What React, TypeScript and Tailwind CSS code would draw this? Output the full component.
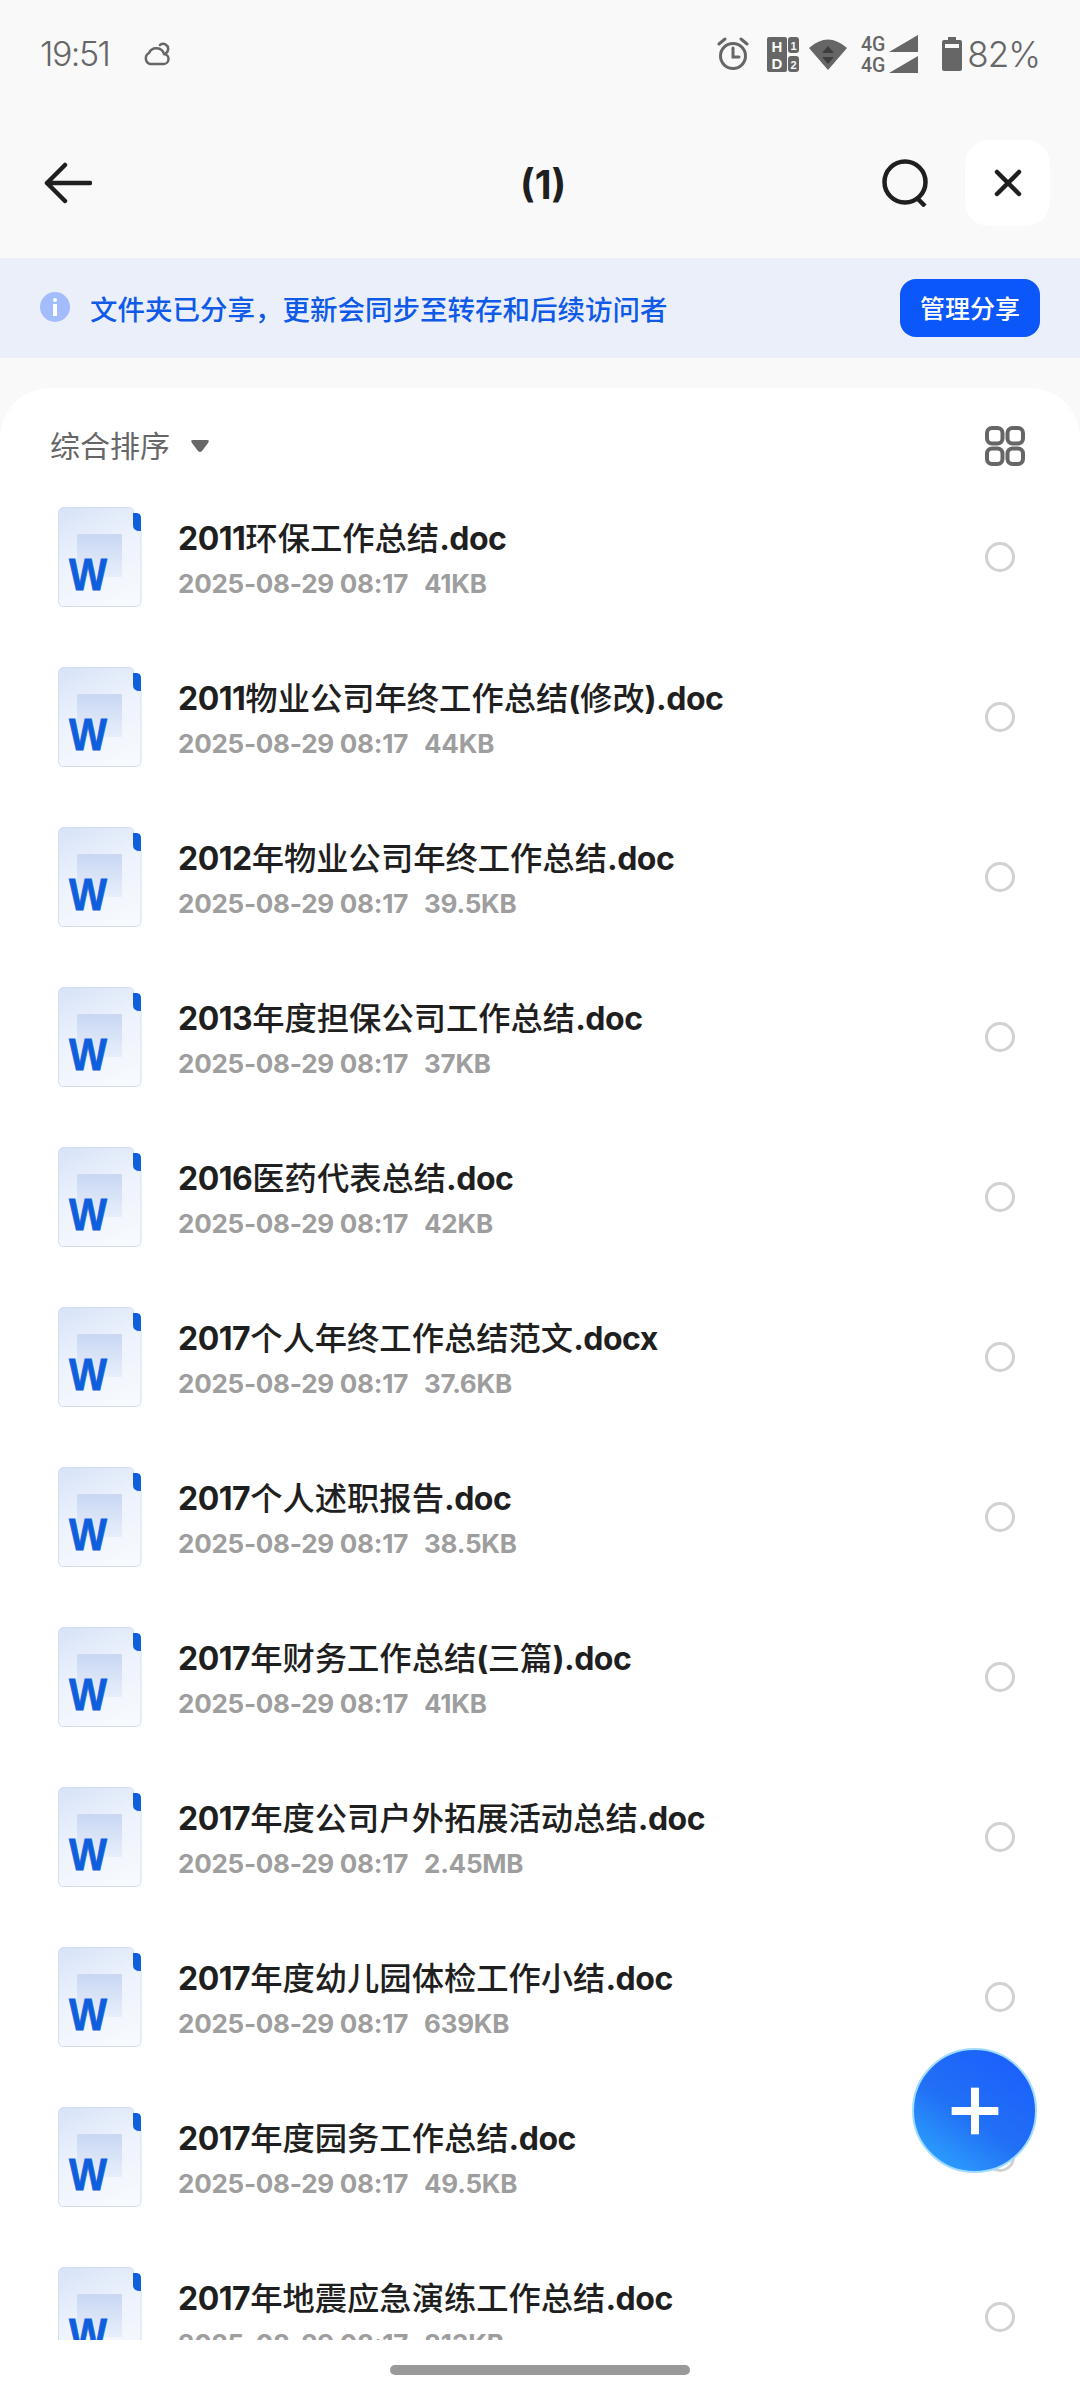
import { Plus } from 'lucide-react';

const files = [
  { name: '2011环保工作总结.doc', size: '41KB' },
  { name: '2011物业公司年终工作总结(修改).doc', size: '44KB' },
  { name: '2012年物业公司年终工作总结.doc', size: '39.5KB' },
  { name: '2013年度担保公司工作总结.doc', size: '37KB' },
  { name: '2016医药代表总结.doc', size: '42KB' },
  { name: '2017个人年终工作总结范文.docx', size: '37.6KB' },
  { name: '2017个人述职报告.doc', size: '38.5KB' },
  { name: '2017年财务工作总结(三篇).doc', size: '41KB' },
  { name: '2017年度公司户外拓展活动总结.doc', size: '2.45MB' },
  { name: '2017年度幼儿园体检工作小结.doc', size: '639KB' },
  { name: '2017年度园务工作总结.doc', size: '49.5KB' },
  { name: '2017年地震应急演练工作总结.doc', size: '813KB' },
];

function WordIcon() {
  return (
    <svg width="84" height="100" viewBox="0 0 84 100" className="shrink-0">
      <defs>
        <linearGradient id="wordBody" x1="0.2" y1="0" x2="0.6" y2="1">
          <stop offset="0" stopColor="#d9e4f8" />
          <stop offset="0.45" stopColor="#ecf2fc" />
          <stop offset="1" stopColor="#f6f9fe" />
        </linearGradient>
        <linearGradient id="wordSquare" x1="0.5" y1="0" x2="0.5" y2="1">
          <stop offset="0" stopColor="#c9d7f3" />
          <stop offset="1" stopColor="#e8effb" />
        </linearGradient>
      </defs>
      <path
        d="M6 .5H71Q75.500 .5 75.500 5V18Q75.500 24 83 24V94Q83 99.500 77 99.500H6Q.5 99.500 .5 94V6Q.5 .5 6 .5Z"
        fill="url(#wordBody)"
        stroke="#d3def3"
      />
      <rect x="19" y="27" width="45" height="43" fill="url(#wordSquare)" />
      <path d="M75 6h3q5 0 5 5v13h-1q-7 0-7-6z" fill="#0f5fdc" />
      <text x="11" y="83" fontFamily="Liberation Sans" fontWeight="700" fontSize="45" textLength="38" lengthAdjust="spacingAndGlyphs" fill="#0f5fdc" stroke="#0f5fdc" strokeWidth="0.8">
        W
      </text>
    </svg>
  );
}

function StatusIcons() {
  return (
    <div className="flex items-center text-[#666666]">
      {/* alarm */}
      <svg width="32" height="34" viewBox="0 0 32 34" fill="none" stroke="#666666" strokeLinecap="round" className="mr-[18px]">
        <circle cx="16" cy="19" r="12.5" strokeWidth="3" />
        <path d="M16 11v9h6" strokeWidth="3" />
        <path d="M2 7l6-5M30 7l-6-5" strokeWidth="3" />
      </svg>
      {/* HD 1 2 */}
      <svg width="32" height="35" viewBox="0 0 32 35" className="mr-[10px] overflow-visible">
        <rect x="0" y="0" width="20" height="35" rx="2" fill="#666666" />
        <rect x="21" y="0" width="11" height="16" rx="3" fill="#666666" />
        <rect x="21" y="19" width="11" height="16" rx="3" fill="#666666" />
        <text x="10" y="15" textAnchor="middle" fontFamily="Liberation Sans" fontWeight="700" fontSize="15" fill="#f9f9f9">H</text>
        <text x="10" y="32" textAnchor="middle" fontFamily="Liberation Sans" fontWeight="700" fontSize="15" fill="#f9f9f9">D</text>
        <text x="26.500" y="13" textAnchor="middle" fontFamily="Liberation Sans" fontWeight="700" fontSize="11" fill="#f9f9f9">1</text>
        <text x="26.500" y="32" textAnchor="middle" fontFamily="Liberation Sans" fontWeight="700" fontSize="11" fill="#f9f9f9">2</text>
      </svg>
      {/* wifi */}
      <svg width="38" height="32" viewBox="0 0 38 32" className="mr-[14px]">
        <path d="M0 10Q19 -7 38 10L19 32Z" fill="#666666" />
        <path d="M19 8l6 7H13zM19 26l-6-7h12z" fill="#3d3d3d" />
      </svg>
      {/* dual 4G */}
      <svg width="58" height="46" viewBox="0 -4 58 46" className="mr-[23px]">
        <text x="0" y="16" fontFamily="Roboto" fontWeight="500" fontSize="19.500" fill="#666666">4G</text>
        <text x="0" y="37" fontFamily="Roboto" fontWeight="500" fontSize="19.500" fill="#666666">4G</text>
        <path d="M57 0V17H28Z" fill="#666666" />
        <path d="M57 21V38H28Z" fill="#666666" />
      </svg>
      {/* battery */}
      <svg width="20" height="34" viewBox="0 0 20 34" className="mr-[5px]">
        <path d="M6 0h8v3h4q2 0 2 2v27q0 2-2 2H2q-2 0-2-2V5q0-2 2-2h4z" fill="#666666" />
        <rect x="3" y="7" width="14" height="4" fill="#f9f9f9" />
      </svg>
      <span className="text-[35px] font-light leading-none tracking-[-1px]">82%</span>
    </div>
  );
}

function FileName({ name }: { name: string }) {
  const parts = name.split(/([\u4e00-\u9fff]+)/).filter(Boolean);
  return (
    <div className="text-[32px] leading-[40px] text-[#1f1f1f] whitespace-nowrap">
      {parts.map((part, i) =>
        /[\u4e00-\u9fff]/.test(part) ? (
          <span key={i} className="text-[32.300px] font-medium">{part}</span>
        ) : (
          <span key={i} className="font-bold tracking-[-0.5px]">{part}</span>
        )
      )}
    </div>
  );
}

function FileRow({ name, size }: { name: string; size: string }) {
  return (
    <div className="flex h-40 items-center pl-[58px] pr-[65px]">
      <WordIcon />
      <div className="ml-[36px] flex-1 pt-[5px]">
        <FileName name={name} />
        <div className="mt-[8px] text-[26px] leading-[34px] font-bold text-[#9e9e9e] whitespace-nowrap tracking-[-0.25px]">
          2025-08-29 08:17<span className="ml-[16px]">{size}</span>
        </div>
      </div>
      <div className="h-[30px] w-[30px] rounded-full border-[3px] border-[#d2d2d2]" />
    </div>
  );
}

export default function App() {
  return (
    <div className="relative flex h-[2400px] w-[1080px] flex-col overflow-hidden bg-[#f9f9f9] font-['Inter','Noto_Sans_CJK_SC',sans-serif]">
      {/* Status bar */}
      <div className="flex h-[108px] shrink-0 items-center justify-between pl-[40px] pr-[40px]">
        <div className="flex items-center text-[#666666]">
          <span className="text-[34px] font-light leading-none tracking-[-1.500px]">19:51</span>
          <svg width="28" height="24" viewBox="0 0 28 24" fill="none" stroke="#666666" strokeWidth="2.5" strokeLinecap="round" className="ml-[34px]">
            <path d="M7 22h13a5 5 0 0 0 1-10 8 8 0 0 0-15-1 6 6 0 0 0 1 11z" />
            <path d="M17 3a5 5 0 0 1 8 5 4 4 0 0 1-2 3" />
          </svg>
        </div>
        <StatusIcons />
      </div>

      {/* Header */}
      <div className="flex h-[150px] shrink-0 items-center pl-[44px] pr-[30px]">
        <svg width="48" height="42" viewBox="0 0 48 42" fill="none" stroke="#1f1f1f" strokeWidth="4.500" strokeLinecap="round" strokeLinejoin="round">
          <path d="M46 21H3M21 3L3 21l18 18" />
        </svg>
        <span className="ml-[428px] mt-[5px] text-[39px] font-bold text-[#1f1f1f]">(1)</span>
        <div className="ml-auto flex items-center">
          <svg width="48" height="48" viewBox="0 0 48 48" fill="none" stroke="#1f1f1f" strokeWidth="4.500" className="mr-[35px]">
            <circle cx="23" cy="23" r="20.500" />
            <path d="M34 38l9 9" />
          </svg>
          <div className="flex h-[86px] w-[85px] items-center justify-center rounded-[24px] bg-white">
            <svg width="28" height="28" viewBox="0 0 28 28" fill="none" stroke="#1f1f1f" strokeWidth="4.500" strokeLinecap="round">
              <path d="M3 3l22 22M25 3L3 25" />
            </svg>
          </div>
        </div>
      </div>

      {/* Share banner */}
      <div className="flex h-[100px] shrink-0 items-center justify-between bg-[#ebeffa] pl-[40px] pr-[40px]">
        <div className="flex items-center">
          <div className="relative -mt-[3px] h-[30px] w-[30px] rounded-full bg-[#a3bcfb]">
            <div className="absolute left-[13px] top-[6px] h-[4px] w-[4px] rounded-full bg-white" />
            <div className="absolute left-[13px] top-[12px] h-[12px] w-[4px] bg-white" />
          </div>
          <span className="ml-[20px] pt-[5px] text-[27.500px] font-medium text-[#0f5be8]">文件夹已分享，更新会同步至转存和后续访问者</span>
        </div>
        <div className="flex h-[58px] w-[140px] items-center justify-center rounded-[16px] bg-[#0b57fa] pt-[3px] text-[25px] font-medium text-white">
          管理分享
        </div>
      </div>

      {/* File card */}
      <div className="mt-[30px] flex flex-1 flex-col rounded-t-[50px] bg-white">
        <div className="flex h-[89px] shrink-0 items-start justify-between pl-[50px] pr-[55px] pt-[38px]">
          <div className="flex h-[40px] items-center text-[#666666]">
            <span className="text-[30px] leading-none">综合排序</span>
            <svg width="18" height="13" viewBox="0 0 18 13" className="ml-[21px]">
              <path d="M2 0h14q3 0 1 3l-6 8q-2 2-4 0L1 3Q-1 0 2 0z" fill="#666666" />
            </svg>
          </div>
          <svg width="40" height="40" viewBox="0 0 40 40" fill="none" stroke="#666666" strokeWidth="4">
            <rect x="2" y="2" width="15.500" height="15.500" rx="5" />
            <rect x="22.500" y="2" width="15.500" height="15.500" rx="5" />
            <rect x="2" y="22.500" width="15.500" height="15.500" rx="5" />
            <rect x="22.500" y="22.500" width="15.500" height="15.500" rx="5" />
          </svg>
        </div>

        <div className="h-[1863px] shrink-0 overflow-hidden">
          {files.map(f => (
            <FileRow key={f.name} name={f.name} size={f.size} />
          ))}
        </div>

        {/* Home indicator */}
        <div className="flex justify-center pt-[25px]">
          <div className="h-[10px] w-[300px] rounded-full bg-[#999999]" />
        </div>
      </div>

      {/* Add button */}
      <div className="absolute left-[912px] top-[2048px] flex h-[125px] w-[125px] items-center justify-center rounded-full border-2 border-[#9fdcff] bg-[linear-gradient(35deg,#2ea6ff_5%,#2170f5_45%,#1a5cff_100%)]">
        <Plus size={80} strokeWidth={2.4} color="#ffffff" strokeLinecap="butt" strokeLinejoin="miter" />
      </div>
    </div>
  );
}
